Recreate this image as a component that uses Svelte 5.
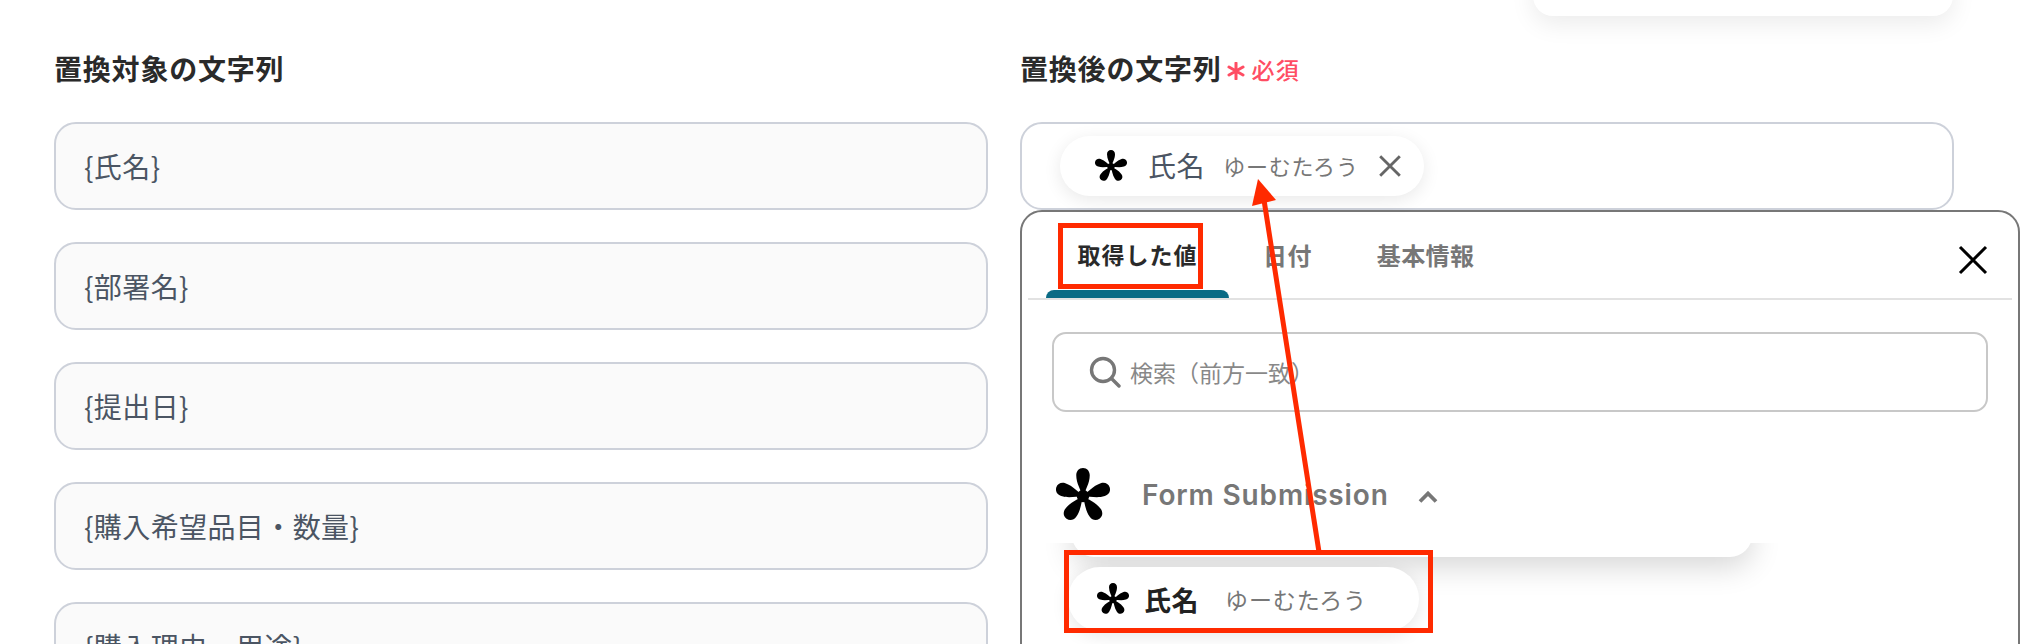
<script>
  const sources = ["{氏名}", "{部署名}", "{提出日}", "{購入希望品目・数量}", "{購入理由・用途}"];
  const tabs = ["取得した値", "日付", "基本情報"];
  const petals = [0, 72, 144, 216, 288];
</script>

{#snippet logo(cls)}
  <svg class={cls} viewBox="0 0 52 52" aria-hidden="true">
    <circle cx="26" cy="27" r="6" fill="#000" />
    {#each petals as a}
      <path d="M26 28 C24 21 19.5 15 19.5 7 C19.5 3 22 0 26 0 C30 0 32.5 3 32.5 7 C32.5 15 28 21 26 28 Z" transform="rotate({a} 26 27)" fill="#000" />
    {/each}
  </svg>
{/snippet}

<div class="page">
  <div class="top-card"></div>

  <div class="columns">
    <section class="col">
      <h2>置換対象の文字列</h2>
      <div class="fields">
        {#each sources as s}
          <div class="field">{s}</div>
        {/each}
      </div>
    </section>

    <section class="col">
      <h2>置換後の文字列<span class="req"><svg viewBox="0 0 18 18" class="star"><path d="M9 1v16M2 5l14 8M16 5L2 13" stroke="#ff4d63" stroke-width="3" stroke-linecap="round" /></svg>必須</span></h2>
      <div class="field target">
        <div class="chip">
          {@render logo("logo-sm")}
          <span class="chip-name">氏名</span>
          <span class="chip-value">ゆーむたろう</span>
          <svg class="chip-x" viewBox="0 0 22 22"><path d="M2 2l18 18M20 2L2 20" stroke="#666" stroke-width="2.6" fill="none" /></svg>
        </div>
      </div>

      <div class="panel">
        <div class="tabs">
          {#each tabs as t, i}
            <div class="tab" class:active={i === 0}>{t}</div>
          {/each}
          <svg class="close" viewBox="0 0 30 30"><path d="M2 2l26 26M28 2L2 28" stroke="#000" stroke-width="3" fill="none" /></svg>
        </div>

        <div class="search">
          <svg class="search-icon" viewBox="0 0 32 32"><circle cx="14" cy="14" r="11.5" stroke="#777" stroke-width="3.4" fill="none" /><path d="M22.5 22.5L30 30" stroke="#777" stroke-width="3.4" stroke-linecap="round" /></svg>
          <span>検索（前方一致）</span>
        </div>

        <div class="group">
          {@render logo("logo-lg")}
          <span class="group-name">Form Submission</span>
          <svg class="chevron" viewBox="0 0 20 12"><path d="M2 10.5L10 2.5l8 8" stroke="#777" stroke-width="3.8" fill="none" /></svg>
        </div>

        <div class="results">
          <div class="result-card"></div>
          <div class="result-chip">
            {@render logo("logo-sm")}
            <span class="result-name">氏名</span>
            <span class="result-value">ゆーむたろう</span>
          </div>
        </div>
      </div>
    </section>
  </div>

  <!-- annotations on top of the screenshot -->
  <div class="mark mark-tab"></div>
  <div class="mark mark-chip"></div>
  <svg class="arrow" viewBox="0 0 2044 644">
    <path d="M1319 552L1264 200" stroke="#ff2a00" stroke-width="5" fill="none" />
    <path d="M1258 179L1276 200L1252 206Z" fill="#ff2a00" />
  </svg>
</div>

<style>
  :global(body) {
    margin: 0;
    background: #fff;
  }

  .page {
    position: relative;
    width: 2044px;
    height: 644px;
    overflow: hidden;
    background: #fff;
    font-family: "Noto Sans CJK JP", "Noto Sans", sans-serif;
  }

  .top-card {
    position: absolute;
    left: 1533px;
    top: -40px;
    width: 420px;
    height: 56px;
    background: #fff;
    border-radius: 20px;
    box-shadow: 0 8px 24px rgba(0, 0, 0, 0.08);
  }

  .columns {
    display: grid;
    grid-template-columns: 934px 1000px;
    column-gap: 32px;
    padding: 50px 0 0 54px;
  }

  h2 {
    display: flex;
    align-items: center;
    height: 36px;
    margin: 0 0 36px;
    font-size: 28px;
    font-weight: 700;
    letter-spacing: 0.8px;
    line-height: 36px;
    color: #2a2a2a;
  }

  .req {
    display: flex;
    align-items: center;
    margin-left: 5px;
    margin-top: 2px;
    font-size: 23px;
    font-weight: 500;
    letter-spacing: 1.2px;
    color: #ff4d63;
  }

  .star {
    width: 18px;
    height: 18px;
    margin-right: 7px;
    margin-top: 3px;
  }

  .fields {
    display: flex;
    flex-direction: column;
    gap: 32px;
  }

  .field {
    box-sizing: border-box;
    display: flex;
    align-items: center;
    width: 934px;
    height: 88px;
    padding-left: 28px;
    background: #fafafa;
    border: 2px solid #cdd1da;
    border-radius: 22px;
    font-size: 28px;
    letter-spacing: 0.4px;
    color: #4b5563;
  }

  .target {
    padding-left: 38px;
    background: #fff;
  }

  .chip {
    display: flex;
    align-items: center;
    box-sizing: border-box;
    width: 364px;
    height: 60px;
    padding-left: 35px;
    background: #fff;
    border-radius: 30px;
    box-shadow: 0 4px 18px rgba(0, 0, 0, 0.09);
  }

  :global(.logo-sm) {
    flex: none;
    width: 32px;
    height: 32px;
  }

  :global(.logo-lg) {
    flex: none;
    width: 54px;
    height: 54px;
  }

  .chip-name {
    margin-left: 21px;
    margin-bottom: 2px;
    font-size: 28px;
    letter-spacing: 0.6px;
    color: #4b5563;
  }

  .chip-value {
    margin-left: 18px;
    margin-bottom: 2px;
    font-size: 22px;
    letter-spacing: 0.8px;
    color: #777;
  }

  .chip-x {
    width: 24px;
    height: 24px;
    margin-left: 19px;
  }

  .panel {
    box-sizing: border-box;
    width: 1000px;
    height: 520px;
    background: #fff;
    border: 2px solid #777;
    border-radius: 22px;
  }

  .tabs {
    display: flex;
    align-items: stretch;
    position: relative;
    height: 86px;
    margin: 0 6px;
    border-bottom: 2px solid #e2e2e2;
    padding-left: 18px;
  }

  .tab {
    display: flex;
    align-items: center;
    padding-bottom: 2px;
    margin-left: 65px;
    font-size: 24px;
    font-weight: 700;
    letter-spacing: 0.4px;
    color: #777;
  }

  .tab.active {
    position: relative;
    justify-content: center;
    width: 183px;
    margin: 0 -31px 0 0;
    font-size: 23px;
    letter-spacing: 1px;
    color: #2a2a2a;
  }

  .tab.active::after {
    content: "";
    position: absolute;
    left: 0;
    right: 0;
    bottom: 0;
    height: 8px;
    background: #0a6b85;
    border-radius: 8px 8px 0 0;
  }

  .close {
    position: absolute;
    right: 24px;
    top: 33px;
    width: 30px;
    height: 30px;
  }

  .search {
    box-sizing: border-box;
    display: flex;
    align-items: center;
    width: 936px;
    height: 80px;
    margin: 32px 0 0 30px;
    padding-left: 35px;
    border: 2px solid #c8c8c8;
    border-radius: 14px;
    font-size: 23px;
    color: #888;
  }

  .search-icon {
    width: 32px;
    height: 32px;
    margin-right: 9px;
  }

  .group {
    display: flex;
    align-items: center;
    height: 54px;
    margin: 56px 0 0 34px;
  }

  .group-name {
    margin-left: 32px;
    font-family: Inter, sans-serif;
    font-size: 28px;
    font-weight: 600;
    letter-spacing: 0.85px;
    color: #777;
  }

  .chevron {
    width: 20px;
    height: 12px;
    margin-left: 29px;
    margin-top: 4px;
  }

  /* the scroll area clips the shadow of the card above its top edge */
  .results {
    position: relative;
    height: 120px;
    margin-top: 21px;
    overflow: hidden;
  }

  .result-card {
    position: absolute;
    left: 50px;
    top: -40px;
    width: 680px;
    height: 54px;
    background: #fff;
    border-radius: 22px;
    box-shadow: 0 10px 30px rgba(0, 0, 0, 0.16);
  }

  .result-chip {
    position: absolute;
    left: 46px;
    top: 24px;
    display: flex;
    align-items: center;
    box-sizing: border-box;
    width: 351px;
    height: 64px;
    padding-left: 29px;
    background: #fff;
    border-radius: 32px;
    box-shadow: 0 4px 18px rgba(0, 0, 0, 0.1);
  }

  .result-name {
    margin-left: 15px;
    font-size: 27px;
    font-weight: 700;
    letter-spacing: 0.5px;
    color: #222;
  }

  .result-value {
    margin-left: 26px;
    font-size: 23px;
    letter-spacing: 0.9px;
    color: #777;
  }

  .mark {
    position: absolute;
    box-sizing: border-box;
    border: 5px solid #ff2a00;
  }

  .mark-tab {
    left: 1058px;
    top: 223px;
    width: 145px;
    height: 66px;
  }

  .mark-chip {
    left: 1064px;
    top: 550px;
    width: 369px;
    height: 83px;
  }

  .arrow {
    position: absolute;
    left: 0;
    top: 0;
    width: 2044px;
    height: 644px;
    pointer-events: none;
  }
</style>
